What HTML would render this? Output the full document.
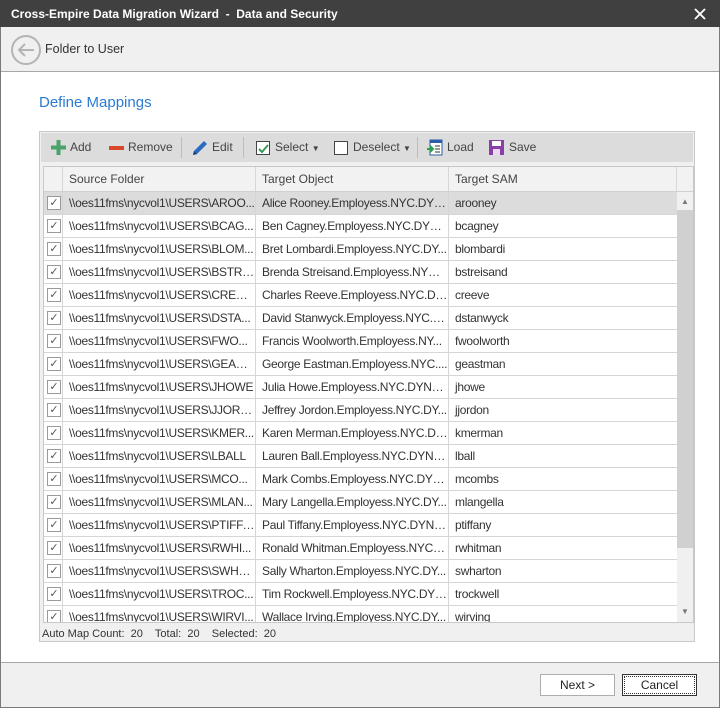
<!DOCTYPE html>
<html><head><meta charset="utf-8"><style>
*{margin:0;padding:0;box-sizing:border-box}
body{width:720px;height:708px;position:relative;font-family:"Liberation Sans",sans-serif;font-size:12px;color:#333;background:#fff;overflow:hidden}
.abs{position:absolute}
#win{left:0;top:0;width:720px;height:708px;border:1px solid #7a7a7a}
#title{left:0;top:0;width:720px;height:27px;background:#404040;color:#fff;font-weight:bold;font-size:12px;line-height:28px;padding-left:11px}
#nav{left:1px;top:27px;width:718px;height:45px;background:#f0f0f0;border-bottom:1px solid #a8a8a8}
#foot{left:1px;top:662px;width:718px;height:45px;background:#f0f0f0;border-top:1px solid #a8a8a8}
.btn{position:absolute;top:674px;width:75px;height:22px;border:1px solid #adadad;background:#fff;text-align:center;line-height:20px;font-size:12px;color:#222}
#panel{left:39px;top:131px;width:656px;height:511px;border:1px solid #c8c8c8;background:#f0f0f0}
#tb{left:41px;top:133px;width:652px;height:29px;background:#dcdcdc}
.ti{position:absolute;top:0;line-height:29px;font-size:12px;color:#444}
.sep{position:absolute;top:4px;width:1px;height:21px;background:#bcbcbc}
#grid{left:43px;top:166px;width:651px;height:457px;border:1px solid #c8c8c8;background:#fff;overflow:hidden}
.row{position:absolute;left:0;width:633px;height:23px;border-bottom:1px solid #d6d6d6}
.c{position:absolute;top:0;height:22px;line-height:22px;white-space:nowrap;overflow:hidden;text-overflow:ellipsis;padding-left:6px;border-right:1px solid #d6d6d6;letter-spacing:-0.3px}
.cb{position:absolute;left:3px;top:4px;width:14px;height:14px;border:1px solid #9a9a9a;background:#fff;font-size:11px;line-height:12px;text-align:center;color:#555;letter-spacing:0}
</style></head><body>
<div class="abs" id="win"></div>
<div class="abs" id="title">Cross-Empire Data Migration Wizard &nbsp;- &nbsp;Data and Security</div>
<svg class="abs" style="left:694px;top:8px" width="12" height="12"><path d="M1 1L11 11M11 1L1 11" stroke="#fff" stroke-width="1.8"/></svg>
<div class="abs" id="nav"></div>
<svg class="abs" style="left:10px;top:34px" width="32" height="32"><circle cx="16" cy="16" r="14" fill="none" stroke="#b4b4b4" stroke-width="2"/><path d="M24 16H9M15 10L9 16L15 22" fill="none" stroke="#b4b4b4" stroke-width="2"/></svg>
<div class="abs" style="left:45px;top:42px;font-size:12.5px;color:#333">Folder to User</div>
<div class="abs" style="left:39px;top:94px;font-size:15px;color:#2b7bd4">Define Mappings</div>
<div class="abs" id="panel"></div>
<div class="abs" id="tb">
<svg style="position:absolute;left:10px;top:7px" width="15" height="15"><path d="M5.5 0h4v5.5H15v4H9.5V15h-4V9.5H0v-4h5.5z" fill="#4aa36a"/></svg>
<div class="ti" style="left:29px">Add</div>
<div style="position:absolute;left:68px;top:13px;width:15px;height:4px;background:#d9472b"></div>
<div class="ti" style="left:87px">Remove</div>
<div class="sep" style="left:140px"></div>
<svg style="position:absolute;left:150px;top:6px" width="18" height="18"><path d="M2 16L3 12L13 2L16 5L6 15Z" fill="#2b6cc0"/><path d="M2 16l1-4 3 3z" fill="#1a3f70"/></svg>
<div class="ti" style="left:171px">Edit</div>
<div class="sep" style="left:202px"></div>
<div style="position:absolute;left:215px;top:8px;width:14px;height:14px;border:1px solid #444;background:#fff"></div>
<svg style="position:absolute;left:216px;top:9px" width="13" height="13"><path d="M2 7l3 3 6-7" fill="none" stroke="#3a9a5a" stroke-width="2"/></svg>
<div class="ti" style="left:234px">Select <span style="font-size:8px">▼</span></div>
<div style="position:absolute;left:293px;top:8px;width:14px;height:14px;border:1px solid #444;background:#fff"></div>
<div class="ti" style="left:312px">Deselect <span style="font-size:8px">▼</span></div>
<div class="sep" style="left:376px"></div>
<svg style="position:absolute;left:386px;top:6px" width="16" height="17"><rect x="3" y="1" width="12" height="15" fill="#fff" stroke="#2b5ea8"/><rect x="3" y="1" width="12" height="3" fill="#2b5ea8"/><path d="M8 7h5M8 10h5M8 13h5" stroke="#333"/><path d="M0 10h5M3 7l3 3-3 3" fill="none" stroke="#2aa050" stroke-width="2"/></svg>
<div class="ti" style="left:406px">Load</div>
<svg style="position:absolute;left:448px;top:7px" width="15" height="15"><rect x="0" y="0" width="15" height="15" fill="#8a3fa8"/><rect x="3" y="1" width="9" height="5" fill="#fff"/><rect x="4" y="9" width="7" height="6" fill="#e8d8f0"/></svg>
<div class="ti" style="left:468px">Save</div>
</div>
<div class="abs" id="grid">
<div style="position:absolute;left:0;top:0;width:651px;height:25px;background:#f2f2f2;border-bottom:1px solid #d0d0d0">
<div class="c" style="left:0;width:19px;height:24px"></div>
<div class="c" style="left:19px;width:193px;padding-left:6px;height:24px;line-height:24px;color:#444;letter-spacing:0">Source Folder</div>
<div class="c" style="left:212px;width:193px;height:24px;line-height:24px;color:#444;letter-spacing:0">Target Object</div>
<div class="c" style="left:405px;width:228px;height:24px;line-height:24px;color:#444;letter-spacing:0">Target SAM</div>
</div>
<div style="position:absolute;left:633px;top:25px;width:17px;height:432px;background:#f0f0f0"></div>
<div style="position:absolute;left:633px;top:43px;width:17px;height:338px;background:#d0d0d0"></div>
<div style="position:absolute;left:637px;top:30px;font-size:8px;color:#777">▲</div>
<div style="position:absolute;left:637px;top:440px;font-size:8px;color:#777">▼</div>
<div id="rows"></div>
</div>
<div class="abs" style="left:42px;top:628px;font-size:11px;color:#333">Auto Map Count:&nbsp; 20 &nbsp;&nbsp; Total:&nbsp; 20 &nbsp;&nbsp; Selected:&nbsp; 20</div>
<div class="abs" id="foot"></div>
<div class="btn" style="left:540px">Next &gt;</div>
<div class="btn" style="left:622px;border:1px solid #333;outline:1px dotted #333;outline-offset:-3px">Cancel</div>
<script>
var d=[["AROO...","Alice Rooney.Employess.NYC.DYN...","arooney"],["BCAG...","Ben Cagney.Employess.NYC.DYNA...","bcagney"],["BLOM...","Bret Lombardi.Employess.NYC.DY...","blombardi"],["BSTRE...","Brenda Streisand.Employess.NYC....","bstreisand"],["CREEVE","Charles Reeve.Employess.NYC.DY...","creeve"],["DSTA...","David Stanwyck.Employess.NYC.D...","dstanwyck"],["FWO...","Francis Woolworth.Employess.NY...","fwoolworth"],["GEAST...","George Eastman.Employess.NYC....","geastman"],["JHOWE","Julia Howe.Employess.NYC.DYNA...","jhowe"],["JJORD...","Jeffrey Jordon.Employess.NYC.DY...","jjordon"],["KMER...","Karen Merman.Employess.NYC.DY...","kmerman"],["LBALL","Lauren Ball.Employess.NYC.DYNA...","lball"],["MCO...","Mark Combs.Employess.NYC.DYN...","mcombs"],["MLAN...","Mary Langella.Employess.NYC.DY...","mlangella"],["PTIFFA...","Paul Tiffany.Employess.NYC.DYNA...","ptiffany"],["RWHI...","Ronald Whitman.Employess.NYC.D...","rwhitman"],["SWHA...","Sally Wharton.Employess.NYC.DY...","swharton"],["TROC...","Tim Rockwell.Employess.NYC.DYN...","trockwell"],["WIRVI...","Wallace Irving.Employess.NYC.DY...","wirving"]];
var h="";d.forEach(function(r,i){h+='<div class="row" style="top:'+(25+i*23)+'px;'+(i==0?'background:#dcdcdc':'')+'"><div class="c" style="left:0;width:19px;padding:0"><div class="cb">✓</div></div><div class="c" style="left:19px;width:193px">\\\\oes11fms\\nycvol1\\USERS\\'+r[0]+'</div><div class="c" style="left:212px;width:193px">'+r[1]+'</div><div class="c" style="left:405px;width:228px;border-right:none">'+r[2]+'</div></div>';});
document.getElementById("rows").innerHTML=h;
</script>
</body></html>
